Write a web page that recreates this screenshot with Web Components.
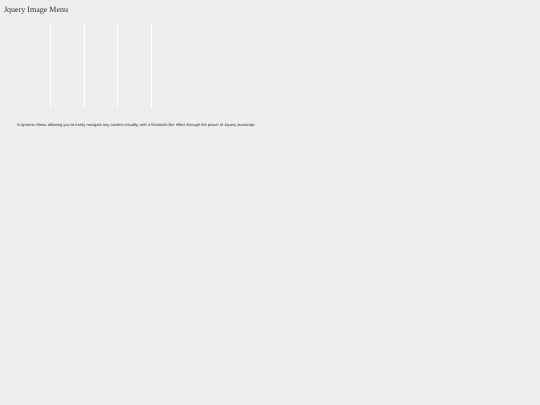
<!DOCTYPE html>
<html lang="en">
<head>
<meta charset="utf-8">
<title>Jquery Image Menu</title>
<style>
    body {
        margin: 0;
        background: #eee;
        color: #333;
        font-family: "Liberation Serif", "Times New Roman", serif;
        text-rendering: geometricPrecision;
    }
</style>
</head>
<body>
<page-header>Jquery Image Menu</page-header>
<main>
    <image-menu></image-menu>
    <menu-description>A dynamic Menu allowing you to easily navigate any content visually, with a Mootools like effect through the power of Jquery javascript.</menu-description>
</main>

<script>
class PageHeader extends HTMLElement {
    constructor() {
        super();
        this.attachShadow({ mode: 'open' });
    }

    connectedCallback() {
        this.shadowRoot.innerHTML = `
            <style>
                :host {
                    display: block;
                    padding: 4px 4px 0;
                    will-change: transform;
                }
                h1 {
                    margin: 0;
                    font-size: 8px;
                    line-height: 12px;
                    font-weight: normal;
                }
            </style>
            <h1><slot></slot></h1>
        `;
    }
}

class ImageMenu extends HTMLElement {
    constructor() {
        super();
        this.attachShadow({ mode: 'open' });
    }

    connectedCallback() {
        const labels = ['First image', 'Second image', 'Third image', 'Fourth image'];
        this.shadowRoot.innerHTML = `
            <style>
                :host {
                    display: block;
                    padding: 8px 17px 0;
                }
                ul {
                    display: grid;
                    grid-template-columns: repeat(4, 1fr);
                    max-width: 135px;
                    margin: 0;
                    padding: 0;
                    list-style: none;
                }
                a {
                    display: block;
                    height: 84px;
                    border-right: 1px solid #fff;
                }
            </style>
            <ul>
                ${labels.map(label => `<li><a href="#" aria-label="${label}"></a></li>`).join('')}
            </ul>
        `;
    }
}

class MenuDescription extends HTMLElement {
    constructor() {
        super();
        this.attachShadow({ mode: 'open' });
    }

    connectedCallback() {
        this.shadowRoot.innerHTML = `
            <style>
                :host {
                    display: block;
                    margin: 14px 20px 0 17px;
                    padding-bottom: 3px;
                    border-bottom: 1px solid #e8e8e8;
                    font-family: "Liberation Sans", Arial, sans-serif;
                    will-change: transform;
                }
                p {
                    margin: 0;
                    font-size: 4px;
                    line-height: 5px;
                }
            </style>
            <p><slot></slot></p>
        `;
    }
}

customElements.define('page-header', PageHeader);
customElements.define('image-menu', ImageMenu);
customElements.define('menu-description', MenuDescription);
</script>
</body>
</html>
